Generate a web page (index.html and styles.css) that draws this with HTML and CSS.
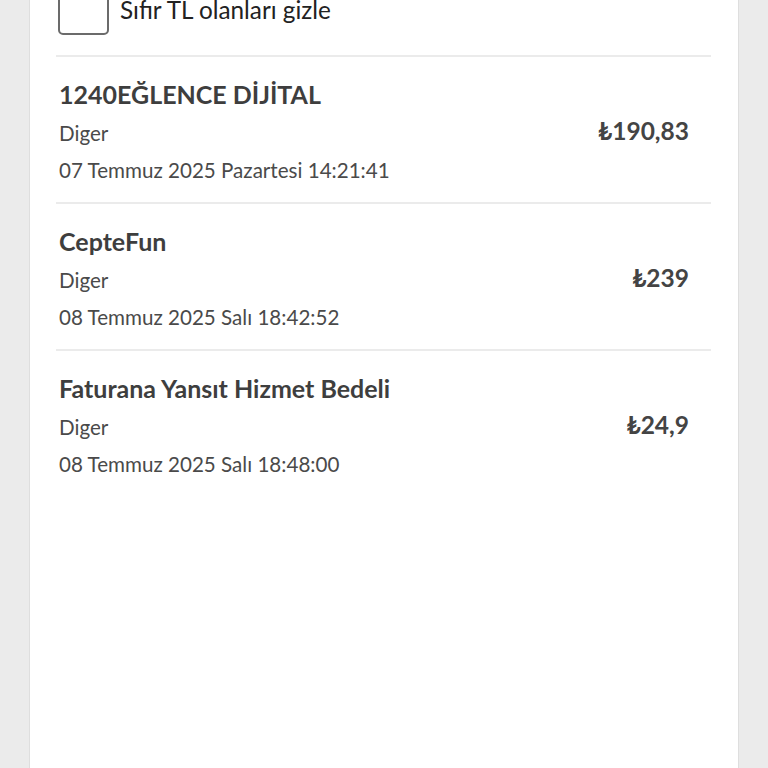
FILE: index.html
```html
<!DOCTYPE html>
<html lang="tr">
<head>
    <meta charset="UTF-8">
    <meta name="viewport" content="width=device-width, initial-scale=1.0">
    <title>İşlem Geçmişi</title>
    <link rel="stylesheet" href="styles.css">
</head>
<body>
    <div class="card">
        <label class="filter">
            <span class="box"></span>
            Sıfır TL olanları gizle
        </label>

        <ul class="list">
            <li class="item">
                <div class="info">
                    <h3>1240EĞLENCE DİJİTAL</h3>
                    <p class="cat">Diger</p>
                    <p class="date">07 Temmuz 2025 Pazartesi 14:21:41</p>
                </div>
                <div class="amount">₺190,83</div>
            </li>
            <li class="item">
                <div class="info">
                    <h3>CepteFun</h3>
                    <p class="cat">Diger</p>
                    <p class="date">08 Temmuz 2025 Salı 18:42:52</p>
                </div>
                <div class="amount">₺239</div>
            </li>
            <li class="item">
                <div class="info">
                    <h3>Faturana Yansıt Hizmet Bedeli</h3>
                    <p class="cat">Diger</p>
                    <p class="date">08 Temmuz 2025 Salı 18:48:00</p>
                </div>
                <div class="amount">₺24,9</div>
            </li>
        </ul>
    </div>
</body>
</html>
```

FILE: styles.css
```css
* {
    margin: 0;
    padding: 0;
    box-sizing: border-box;
}
body {
    font-family: Lato, "Noto Sans", "DejaVu Sans", sans-serif;
    background: #ebebeb;
    overflow: hidden;
}
.card {
    margin: -15px 29px 0;
    min-height: 820px;
    background: #ffffff;
    border-left: 1px solid #dedede;
    border-right: 1px solid #dedede;
    padding: 0 27px 0 26px;
}
.filter {
    display: flex;
    align-items: center;
    gap: 11px;
    height: 50px;
    padding-left: 2px;
    margin-bottom: 20px;
    font-size: 24.3px;
    line-height: 28px;
    color: #222;
}
.box {
    width: 51px;
    height: 50px;
    border: 2px solid #6b6b6b;
    border-radius: 5px;
    background: #fff;
}
.list {
    list-style: none;
}
.item {
    display: flex;
    align-items: center;
    justify-content: space-between;
    border-top: 2px solid #ebebeb;
    padding: 22px 22px 17px 3px;
}
.info h3 {
    font-size: 25px;
    line-height: 30px;
    font-weight: 700;
    color: #3e3e3e;
}
.info p {
    font-size: 20.6px;
    line-height: 30px;
    color: #4a4a4a;
}
.info .cat {
    margin-top: 9px;
}
.info .date {
    margin-top: 7px;
}
.amount {
    font-size: 24.5px;
    font-weight: 700;
    color: #444;
    margin-bottom: 4px;
}
```
